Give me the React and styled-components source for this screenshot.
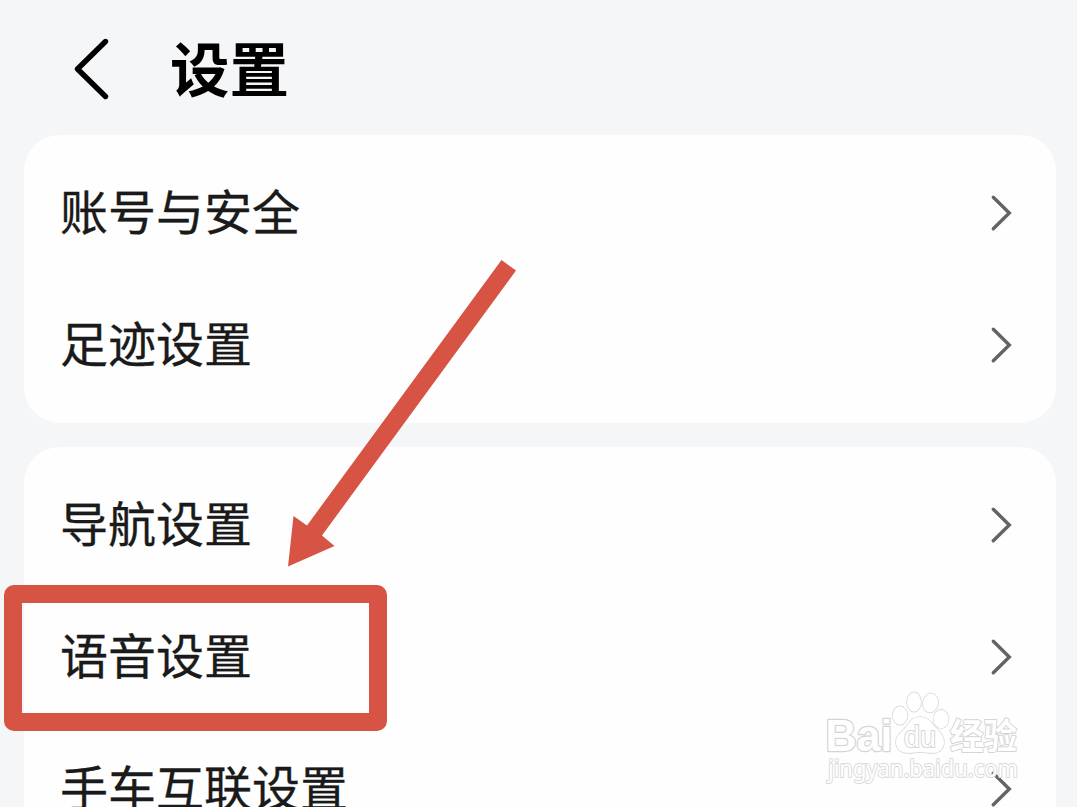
import styled, { createGlobalStyle } from 'styled-components';

const GlobalStyle = createGlobalStyle`
  * {
    box-sizing: border-box;
  }
  body {
    margin: 0;
    background: #f5f6f8;
    font-family: 'Noto Sans CJK SC', sans-serif;
  }
`;

const PageStyle = styled.div`
  position: relative;
  width: 1077px;
  height: 807px;
  overflow: hidden;
  background: #f5f6f8;
`;

const HeaderStyle = styled.header`
  display: flex;
  align-items: center;
  height: 135px;
  padding: 0 0 0 72px;
  button {
    display: flex;
    padding: 0;
    border: 0;
    background: none;
    margin-top: 3px;
  }
  h1 {
    margin: 0 0 4px 58px;
    font-size: 59.5px;
    line-height: 80px;
    font-weight: 700;
    color: #000;
  }
`;

const GroupList = styled.main`
  display: flex;
  flex-direction: column;
  gap: 24px;
  padding: 0 21px 0 24px;
`;

const Group = styled.section`
  padding: 12px 43px 12px 36px;
  border-radius: 36px;
  background: #fefefe;
`;

const Row = styled.div`
  position: relative;
  display: flex;
  align-items: center;
  justify-content: space-between;
  height: 132px;
  font-size: 48px;
  line-height: 72px;
  color: #1a1a1a;
  span {
    padding-bottom: 9px;
    -webkit-text-stroke: 0.3px #1a1a1a;
  }
  svg {
    flex: none;
  }
`;

const Highlight = styled.div`
  position: absolute;
  top: -6px;
  left: -56px;
  width: 383px;
  height: 146px;
  border: 18px solid #d75344;
  border-radius: 10px;
`;

const ArrowStyle = styled.svg`
  position: absolute;
  top: 250px;
  left: 280px;
`;

const WatermarkStyle = styled.svg`
  position: absolute;
  top: 680px;
  left: 817px;
  fill: #fff;
  stroke: #d4d4d4;
  stroke-width: 2px;
  stroke-linejoin: round;
  paint-order: stroke;
  .brand {
    font: 700 44px 'Liberation Sans', sans-serif;
    stroke-width: 2.4px;
  }
  .du {
    font: 400 30px 'Liberation Sans', sans-serif;
  }
  .cn {
    font: 700 35px 'Noto Sans CJK SC', sans-serif;
  }
  .site {
    font: 400 23px 'Noto Sans', sans-serif;
    stroke: #dadada;
    stroke-width: 2px;
  }
`;

const groups = [
  ['账号与安全', '足迹设置'],
  ['导航设置', '语音设置', '手车互联设置'],
];

function Chevron() {
  return (
    <svg width="24" height="38" viewBox="0 0 24 38" fill="none">
      <path
        d="M4.3 3.2L20.3 19L4.3 34.8"
        stroke="#636363"
        strokeWidth="3.4"
        strokeLinecap="round"
      />
    </svg>
  );
}

function Header() {
  return (
    <HeaderStyle>
      <button type="button" aria-label="返回">
        <svg width="40" height="64" viewBox="0 0 40 64" fill="none">
          <path
            d="M33.5 4.5L5.5 32L33.5 59.5"
            stroke="#000"
            strokeWidth="5.4"
            strokeLinecap="round"
            strokeLinejoin="round"
          />
        </svg>
      </button>
      <h1>设置</h1>
    </HeaderStyle>
  );
}

function Arrow() {
  return (
    <ArrowStyle width="250" height="330" viewBox="280 250 250 330">
      <path
        d="M501.5 260L516 270.5L322 535.5L334.5 546L288 566.5L293.5 516L307 525.5Z"
        fill="#d75344"
      />
    </ArrowStyle>
  );
}

function Watermark() {
  return (
    <WatermarkStyle width="220" height="115" viewBox="817 680 220 115">
      <text className="brand" x="825.5" y="751" textLength="67" lengthAdjust="spacingAndGlyphs">
        Bai
      </text>
      <g strokeWidth="1.4">
        <ellipse cx="900" cy="715.5" rx="7.3" ry="9.3" />
        <ellipse cx="914" cy="702" rx="7" ry="9.7" />
        <ellipse cx="930.5" cy="703" rx="7.5" ry="9.5" transform="rotate(12 930.5 703)" />
        <ellipse cx="941" cy="719" rx="7.5" ry="9.3" />
        <path d="M920 717C913 717 909 722 906 727C901 733 896 735 896 742C896 749 901 753 908 753C913 753 916 752 920 752C925 752 928 753 933 753C940 753 944 748 944 742C944 736 940 732 935 727C931 721 927 717 920 717Z" />
      </g>
      <text className="du" x="904" y="747" textLength="32" lengthAdjust="spacingAndGlyphs">
        du
      </text>
      <text className="cn" x="950" y="749" textLength="67" lengthAdjust="spacingAndGlyphs">
        经验
      </text>
      <text className="site" x="828" y="777" textLength="190" lengthAdjust="spacingAndGlyphs">
        jingyan.baidu.com
      </text>
    </WatermarkStyle>
  );
}

export default function App() {
  return (
    <PageStyle>
      <GlobalStyle />
      <Header />
      <GroupList>
        {groups.map((items) => (
          <Group key={items[0]}>
            {items.map((label) => (
              <Row key={label}>
                <span>{label}</span>
                <Chevron />
                {label === '语音设置' && <Highlight />}
              </Row>
            ))}
          </Group>
        ))}
      </GroupList>
      <Arrow />
      <Watermark />
    </PageStyle>
  );
}
